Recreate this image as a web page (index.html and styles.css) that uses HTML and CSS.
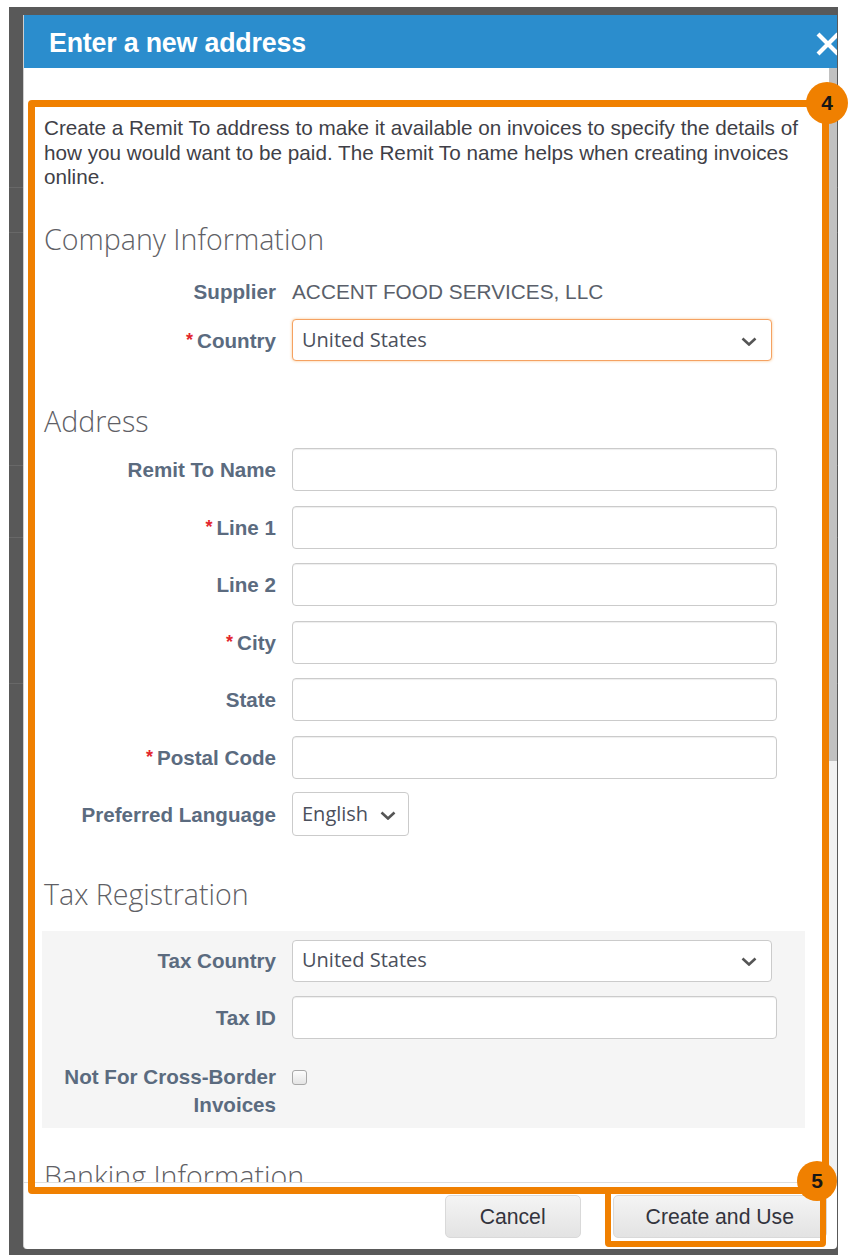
FILE: index.html
```html
<!DOCTYPE html>
<html lang="en">
<head>
<meta charset="utf-8">
<title>Enter a new address</title>
<link rel="stylesheet" href="styles.css">
</head>
<body>
<div class="screen">
  <div class="backdrop">
    <section class="dialog">
      <header class="dialog-head">
        <h1 class="dialog-title">Enter a new address</h1>
        <span class="dialog-close" aria-label="Close">
          <svg width="24" height="24" viewBox="0 0 24 24"><path d="M2 2 L22 22 M22 2 L2 22" stroke="#fff" stroke-width="4.2" fill="none"/></svg>
        </span>
      </header>

      <div class="dialog-body">
        <div class="scroll-content">
          <p class="intro">Create a Remit To address to make it available on invoices to specify the details of how you would want to be paid. The Remit To name helps when creating invoices online.</p>

          <h2 class="section-title">Company Information</h2>
          <div class="form-row row-supplier">
            <label class="field-label">Supplier</label>
            <div class="field-value">ACCENT FOOD SERVICES, LLC</div>
          </div>
          <div class="form-row row-country">
            <label class="field-label"><span class="req">*</span>Country</label>
            <div class="select select-wide is-focused"><span>United States</span><svg class="chev" width="16" height="9" viewBox="0 0 16 9"><path d="M1.5 1.5 L8 7.5 L14.5 1.5" stroke="#555" stroke-width="2.6" fill="none"/></svg></div>
          </div>

          <h2 class="section-title title-address">Address</h2>
          <div class="form-row row-first">
            <label class="field-label">Remit To Name</label>
            <input class="text-input" type="text">
          </div>
          <div class="form-row row-next">
            <label class="field-label"><span class="req">*</span>Line 1</label>
            <input class="text-input" type="text">
          </div>
          <div class="form-row row-next">
            <label class="field-label">Line 2</label>
            <input class="text-input" type="text">
          </div>
          <div class="form-row row-next">
            <label class="field-label"><span class="req">*</span>City</label>
            <input class="text-input" type="text">
          </div>
          <div class="form-row row-next">
            <label class="field-label">State</label>
            <input class="text-input" type="text">
          </div>
          <div class="form-row row-next">
            <label class="field-label"><span class="req">*</span>Postal Code</label>
            <input class="text-input" type="text">
          </div>
          <div class="form-row row-lang">
            <label class="field-label">Preferred Language</label>
            <div class="select select-small"><span>English</span><svg class="chev" width="16" height="9" viewBox="0 0 16 9"><path d="M1.5 1.5 L8 7.5 L14.5 1.5" stroke="#555" stroke-width="2.6" fill="none"/></svg></div>
          </div>

          <h2 class="section-title title-tax">Tax Registration</h2>
          <div class="tax-panel">
            <div class="form-row">
              <label class="field-label">Tax Country</label>
              <div class="select select-wide"><span>United States</span><svg class="chev" width="16" height="9" viewBox="0 0 16 9"><path d="M1.5 1.5 L8 7.5 L14.5 1.5" stroke="#555" stroke-width="2.6" fill="none"/></svg></div>
            </div>
            <div class="form-row row-taxid">
              <label class="field-label">Tax ID</label>
              <input class="text-input" type="text">
            </div>
            <div class="form-row row-check">
              <label class="field-label label-wrap">Not For Cross-Border Invoices</label>
              <span class="checkbox"></span>
            </div>
          </div>

          <h2 class="section-title title-bank">Banking Information</h2>
        </div>
        <div class="scrollbar"><div class="scroll-thumb"></div></div>
      </div>

      <footer class="dialog-foot">
        <button class="btn btn-cancel" type="button">Cancel</button>
        <button class="btn btn-create" type="button">Create and Use</button>
      </footer>

      <div class="callout callout-form"></div>
      <div class="callout callout-action"></div>
      <span class="step step-form">4</span>
      <span class="step step-action">5</span>
    </section>
  </div>
</div>
</body>
</html>
```

FILE: styles.css
```css
* { box-sizing: border-box; }

html, body {
  margin: 0;
  padding: 0;
  background: #fff;
}

body {
  width: 848px;
  height: 1255px;
  overflow: hidden;
  font-family: "Liberation Sans", Arial, sans-serif;
}

.screen {
  padding: 7px 0 0 9px;
}

/* dimmed page behind the modal */
.backdrop {
  width: 829px;
  height: 1248px;
  padding: 8px 1px 6px 14px;
  background:
    linear-gradient(#686868, #686868) 0 180px / 100% 1px no-repeat,
    linear-gradient(#686868, #686868) 0 225px / 100% 1px no-repeat,
    linear-gradient(#686868, #686868) 0 458px / 100% 1px no-repeat,
    linear-gradient(#686868, #686868) 0 530px / 100% 1px no-repeat,
    linear-gradient(#686868, #686868) 0 676px / 100% 1px no-repeat,
    #595959;
}

.dialog {
  position: relative;
  width: 814px;
  height: 1234px;
  background: #fff;
  border-left: 1px solid #cfcfcf;
  border-radius: 0 0 4px 4px;
  display: flex;
  flex-direction: column;
}

.dialog-head {
  flex: none;
  height: 53px;
  background: #2b8dcd;
  display: flex;
  align-items: center;
  padding: 4px 0 0 25px;
  overflow: hidden;
}

.dialog-title {
  margin: 0;
  color: #fff;
  font-family: "Liberation Sans", Arial, sans-serif;
  font-weight: bold;
  font-size: 26.8px;
  letter-spacing: -0.2px;
}

.dialog-close {
  margin-left: auto;
  margin-right: -3px;
  width: 24px;
  height: 24px;
  display: block;
}

.dialog-close svg { display: block; }

.dialog-body {
  flex: none;
  height: 1114px;
  display: flex;
}

.scroll-content {
  flex: 1;
  overflow: hidden;
  padding: 48px 24px 0 18px;
}

.scrollbar {
  flex: none;
  width: 8px;
  background: #f1f1f1;
}

.scroll-thumb {
  height: 693px;
  background: #c1c1c1;
}

.intro {
  margin: 0 -12px 0 0;
  padding-left: 2px;
  font-size: 20.7px;
  line-height: 24.5px;
  color: #3f3f47;
}

.section-title {
  margin: 31.5px 0 0;
  padding-left: 2px;
  font-family: "Open Sans", "Liberation Sans", sans-serif;
  font-weight: 300;
  font-size: 28.6px;
  line-height: 36px;
  color: #5f5f66;
}

.title-address { margin-top: 42px; }
.title-tax { margin-top: 40px; }
.title-bank { margin-top: 30px; white-space: nowrap; }

.form-row {
  display: grid;
  grid-template-columns: 234px 1fr;
  column-gap: 16px;
  align-items: center;
}

.row-supplier { margin-top: 21.5px; }
.row-country { margin-top: 15.5px; }
.row-first { margin-top: 9px; }
.row-next { margin-top: 14.5px; }
.row-lang { margin-top: 13.5px; }
.row-taxid { margin-top: 14px; }

.field-label {
  text-align: right;
  font-weight: bold;
  font-size: 20.6px;
  line-height: 25px;
  color: #5b6b7f;
}

.req {
  color: #e3262d;
  font-size: 18px;
  margin-right: 4px;
  vertical-align: 2px;
}

.field-value {
  font-size: 20.8px;
  line-height: 25px;
  color: #5a5f6a;
}

.text-input {
  display: block;
  width: 485px;
  height: 43px;
  margin: 0;
  padding: 0 9px;
  background: #fff;
  border: 1px solid #cbcbcb;
  border-radius: 4px;
  box-shadow: inset 0 1px 1px rgba(0, 0, 0, 0.07);
  font: 19.5px "Open Sans", sans-serif;
  outline: none;
}

.select {
  display: flex;
  align-items: center;
  justify-content: space-between;
  height: 42px;
  padding: 0 14px 2px 9px;
  background: #fff;
  border: 1px solid #cbcbcb;
  border-radius: 4px;
  font-family: "Open Sans", "Liberation Sans", sans-serif;
  font-size: 20px;
  color: #4b505c;
}

.select .chev { flex: none; margin-top: 4px; }

.select-wide { width: 480px; }

.select-small {
  width: 117px;
  height: 44px;
  padding-right: 12px;
}

.is-focused {
  border-color: #f5a262;
  box-shadow: 0 0 3px rgba(240, 128, 0, 0.45);
}

.tax-panel {
  margin-top: 18.5px;
  padding: 9px 0 8.5px;
  background: #f5f5f5;
}

.row-check {
  margin-top: 24px;
  align-items: start;
}

.label-wrap { line-height: 28.3px; }

.checkbox {
  display: block;
  width: 15px;
  height: 15px;
  margin-top: 7px;
  border: 1px solid #a8a8a8;
  border-radius: 3px;
  background: linear-gradient(#fdfdfd, #e4e4e4);
}

.dialog-foot {
  flex: none;
  height: 67px;
  border-top: 1px solid #dedede;
  display: flex;
  justify-content: flex-end;
  gap: 32px;
  padding: 12px 10px 0 0;
}

.btn {
  height: 43px;
  margin: 0;
  padding: 0 34px;
  border: 1px solid #d9d9d9;
  border-radius: 5px;
  background: linear-gradient(#f4f4f4, #e3e3e3);
  font-family: "Liberation Sans", Arial, sans-serif;
  font-size: 21.2px;
  color: #33343d;
}

.btn-create { padding: 0 32px; }

/* step highlights drawn over the dialog */
.callout {
  position: absolute;
  border: 7px solid #f08000;
  border-radius: 4px;
}

.callout-form {
  left: 4px;
  top: 85px;
  width: 801px;
  height: 1094px;
}

.callout-action {
  left: 581px;
  top: 1172px;
  width: 221px;
  height: 60px;
  border-width: 6.5px;
}

.step {
  position: absolute;
  display: flex;
  align-items: center;
  justify-content: center;
  border-radius: 50%;
  background: #f08000;
  color: #161616;
  font-family: "Liberation Sans", Arial, sans-serif;
  font-weight: bold;
  font-size: 21px;
}

.step-form {
  left: 782px;
  top: 67px;
  width: 42px;
  height: 42px;
}

.step-action {
  left: 773px;
  top: 1146px;
  width: 40px;
  height: 40px;
}
```
